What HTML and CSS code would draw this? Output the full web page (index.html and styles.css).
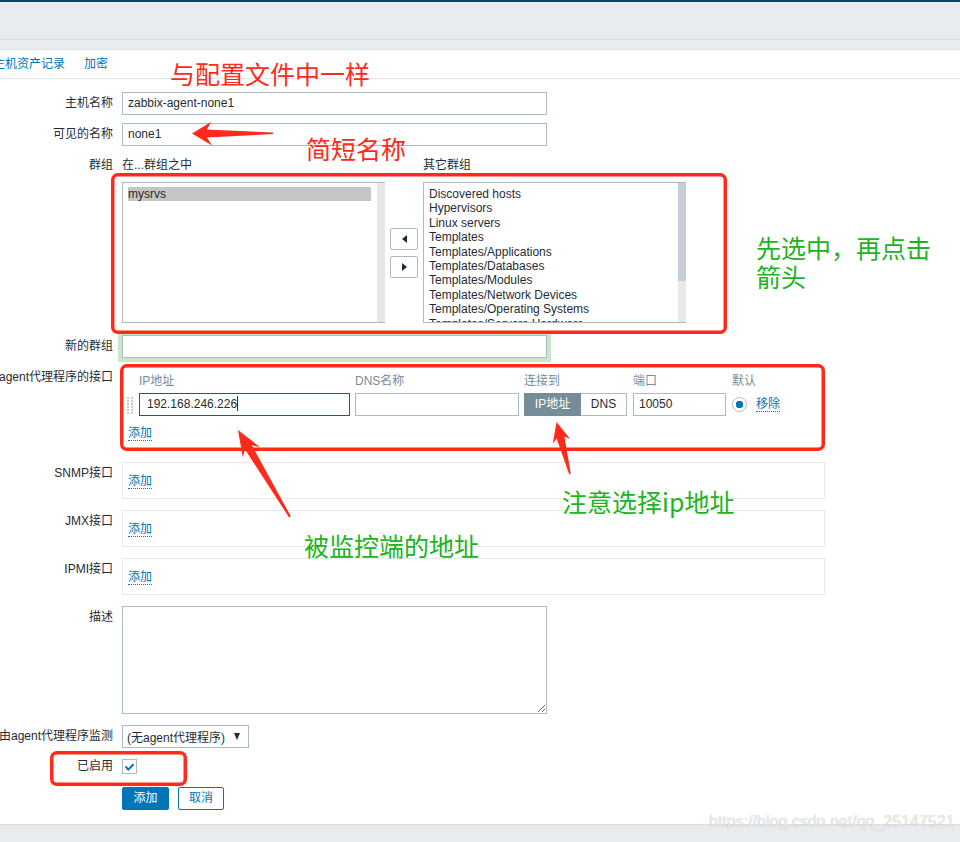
FILE: index.html
```html
<!DOCTYPE html>
<html lang="zh-CN">
<head>
<meta charset="utf-8">
<title>主机</title>
<link rel="stylesheet" href="styles.css">
</head>
<body>
<div class="page">
  <div class="topbar"></div>
  <div class="header"></div>
  <div class="subheader"></div>
  <main class="main">
    <nav class="tabs">
      <a class="tab">主机资产记录</a>
      <a class="tab">加密</a>
    </nav>
    <div class="form">
      <div class="row">
        <div class="lbl">主机名称</div>
        <div class="fld"><div class="input w425">zabbix-agent-none1</div></div>
      </div>
      <div class="row mt8">
        <div class="lbl">可见的名称</div>
        <div class="fld"><div class="input w425">none1</div></div>
      </div>
      <div class="row mt8">
        <div class="lbl">群组</div>
        <div class="fld">
          <div class="grp grp-head"><span>在...群组之中</span><span></span><span>其它群组</span></div>
          <div class="grp grp-body">
            <div class="listbox">
              <div class="items"><div class="item sel">mysrvs</div></div>
              <div class="sb"></div>
            </div>
            <div class="movers">
              <span class="mv"><span class="tri-l"></span></span>
              <span class="mv"><span class="tri-r"></span></span>
            </div>
            <div class="listbox">
              <div class="items">
                <div class="item">Discovered hosts</div>
                <div class="item">Hypervisors</div>
                <div class="item">Linux servers</div>
                <div class="item">Templates</div>
                <div class="item">Templates/Applications</div>
                <div class="item">Templates/Databases</div>
                <div class="item">Templates/Modules</div>
                <div class="item">Templates/Network Devices</div>
                <div class="item">Templates/Operating Systems</div>
                <div class="item">Templates/Servers Hardware</div>
              </div>
              <div class="sb"><div class="thumb"></div></div>
            </div>
          </div>
        </div>
      </div>
      <div class="row mt12">
        <div class="lbl">新的群组</div>
        <div class="fld"><div class="input w425 ok"></div></div>
      </div>
      <div class="row mt8">
        <div class="lbl">agent代理程序的接口</div>
        <div class="fld">
          <div class="iface">
            <div class="igrid ihead"><span></span><span>IP地址</span><span>DNS名称</span><span>连接到</span><span>端口</span><span>默认</span></div>
            <div class="igrid irow">
              <span class="handle"><svg width="6" height="17" viewBox="0 0 6 17"><g fill="#c3cbd1"><rect x="0" y="0" width="2" height="2"/><rect x="4" y="0" width="2" height="2"/><rect x="0" y="3" width="2" height="2"/><rect x="4" y="3" width="2" height="2"/><rect x="0" y="6" width="2" height="2"/><rect x="4" y="6" width="2" height="2"/><rect x="0" y="9" width="2" height="2"/><rect x="4" y="9" width="2" height="2"/><rect x="0" y="12" width="2" height="2"/><rect x="4" y="12" width="2" height="2"/><rect x="0" y="15" width="2" height="2"/><rect x="4" y="15" width="2" height="2"/></g></svg></span>
              <div class="input ip">192.168.246.226<span class="caret"></span></div>
              <div class="input dns"></div>
              <div class="seg"><span class="seg-on">IP地址</span><span class="seg-off">DNS</span></div>
              <div class="input port">10050</div>
              <div class="def"><span class="radio"></span><a class="link">移除</a></div>
            </div>
            <div class="addline"><a class="link">添加</a></div>
          </div>
        </div>
      </div>
      <div class="row mt12">
        <div class="lbl">SNMP接口</div>
        <div class="fld"><div class="ibox"><a class="link">添加</a></div></div>
      </div>
      <div class="row mt11">
        <div class="lbl">JMX接口</div>
        <div class="fld"><div class="ibox"><a class="link">添加</a></div></div>
      </div>
      <div class="row mt11">
        <div class="lbl">IPMI接口</div>
        <div class="fld"><div class="ibox"><a class="link">添加</a></div></div>
      </div>
      <div class="row mt11">
        <div class="lbl">描述</div>
        <div class="fld"><textarea class="desc"></textarea></div>
      </div>
      <div class="row mt11">
        <div class="lbl">由agent代理程序监测</div>
        <div class="fld"><div class="select"><span>(无agent代理程序)</span><span class="arrow"></span></div></div>
      </div>
      <div class="row mt7">
        <div class="lbl">已启用</div>
        <div class="fld"><span class="cb"><svg width="13" height="13" viewBox="0 0 13 13"><polyline points="2.5,6.3 5.3,9.6 10.5,4.2" fill="none" stroke="#0275b8" stroke-width="2"/></svg></span></div>
      </div>
      <div class="row mt9">
        <div class="lbl"></div>
        <div class="fld btns"><span class="btn btn-main">添加</span><span class="btn btn-alt">取消</span></div>
      </div>
    </div>
  </main>
  <div class="footer"></div>

  <svg class="marks" width="960" height="842" viewBox="0 0 960 842">
    <g fill="none" stroke="#ff2a1a" stroke-width="3.5">
      <rect x="112.75" y="174.75" width="612.5" height="157.5" rx="5"/>
      <rect x="121.75" y="365.75" width="701.5" height="83.5" rx="5"/>
      <rect x="51.75" y="752.75" width="133.5" height="31.5" rx="5"/>
    </g>
    <g fill="#ff2a1a">
      <polygon points="192,133.5 211,122 207,129.5 273,132.5 273,134 207,137.5 212,145.5"/>
      <polygon points="238,430 260,447.2 251.7,445.1 290.9,516.5 289.1,517.5 244.9,449.3 242.8,457.4"/>
      <polygon points="556.5,422 570.2,439.1 564.4,436.5 570.8,473.8 569.2,474.2 556.6,438.5 552.8,443.7"/>
    </g>
  </svg>
  <div class="note red n1">与配置文件中一样</div>
  <div class="note red n2">简短名称</div>
  <div class="note green n3"><div>先选中，再点击</div><div>箭头</div></div>
  <div class="note green n4">被监控端的地址</div>
  <div class="note green n5">注意选择ip地址</div>
  <div class="watermark">https://blog.csdn.net/qq_25147521</div>
</div>
</body>
</html>
```

FILE: styles.css
```css
* { box-sizing: border-box; }
html, body { margin: 0; padding: 0; }
body {
  font-family: "Liberation Sans", "Noto Sans CJK SC", sans-serif;
  font-size: 12px;
  color: #1f2c33;
  background: #fff;
}
.page {
  position: relative;
  width: 960px;
  height: 842px;
  overflow: hidden;
  display: flex;
  flex-direction: column;
}
.topbar { flex: none; height: 2px; background: #0d4565; }
.header { flex: none; height: 38px; background: #e9ecef; border-bottom: 1px solid #d9dee2; }
.subheader { flex: none; height: 10px; background: #e9ecef; border-bottom: 1px solid #dfe3e7; }
.main { flex: 1; background: #fff; }
.footer { flex: none; height: 18px; background: #e9ecef; border-top: 1px solid #d9dee2; }

.tabs {
  display: flex;
  gap: 19px;
  height: 29px;
  line-height: 28px;
  margin-left: -7px;
  border-bottom: 1px solid #e5e5e5;
}
.tab { color: #0275b8; }

.form { padding-top: 13px; }
.row {
  display: grid;
  grid-template-columns: 113px 1fr;
  column-gap: 9px;
}
.mt7 { margin-top: 7px; }
.mt8 { margin-top: 8px; }
.mt9 { margin-top: 9px; }
.mt11 { margin-top: 11px; }
.mt12 { margin-top: 12px; }
.lbl {
  display: flex;
  justify-content: flex-end;
  white-space: nowrap;
  line-height: 23px;
  height: 23px;
}
.input {
  height: 23px;
  border: 1px solid #acbbc2;
  padding: 0 5px;
  line-height: 21px;
  background: #fff;
  white-space: nowrap;
}
.w425 { width: 425px; }
.ok { box-shadow: 0 0 0 4px #cbe6cc; }

.grp { display: grid; grid-template-columns: 263px 38px 263px; }
.grp-head { height: 28px; line-height: 23px; }
.grp-body { height: 141px; }
.listbox {
  display: flex;
  height: 141px;
  border: 1px solid #acbbc2;
  border-right: none;
  overflow: hidden;
}
.items {
  flex: 1;
  padding: 4px 6px 4px 5px;
  line-height: 14.4px;
  white-space: nowrap;
  overflow: hidden;
}
.item.sel { background: #c5c5c5; }
.sb { width: 8px; background: #e8e8e8; display: flex; flex-direction: column; }
.thumb { height: 98px; background: #c5cfd6; }
.movers {
  display: flex;
  flex-direction: column;
  align-items: center;
  justify-content: center;
  gap: 6px;
}
.mv {
  width: 28px;
  height: 22px;
  border: 1px solid #acbbc2;
  border-radius: 2px;
  background: #fff;
  display: flex;
  align-items: center;
  justify-content: center;
}
.tri-l { width: 0; height: 0; border-top: 4px solid transparent; border-bottom: 4px solid transparent; border-right: 5px solid #1f2c33; }
.tri-r { width: 0; height: 0; border-top: 4px solid transparent; border-bottom: 4px solid transparent; border-left: 5px solid #1f2c33; }

.iface {
  width: 703px;
  border: 1px solid #e6e9ec;
  padding: 6px 4px 7px;
}
.igrid {
  display: grid;
  grid-template-columns: 12px 216px 169px 109px 99px auto;
}
.ihead { line-height: 16px; color: #768d99; }
.irow { margin-top: 4px; height: 23px; align-items: center; }
.handle { display: flex; align-items: center; height: 23px; padding-top: 1px; }
.ip { width: 211px; border-color: #24577a; color: #1f2c33; padding-left: 7px; }
.caret { display: inline-block; width: 1px; height: 15px; background: #1f2c33; vertical-align: -3px; }
.dns { width: 164px; }
.seg { display: flex; height: 23px; }
.seg-on {
  width: 57px;
  background: #768d99;
  color: #fff;
  text-align: center;
  line-height: 23px;
}
.seg-off {
  width: 46px;
  border: 1px solid #acbbc2;
  border-left: none;
  text-align: center;
  line-height: 21px;
}
.port { width: 93px; }
.def { display: flex; align-items: center; gap: 9px; }
.radio {
  width: 15px;
  height: 15px;
  border: 1px solid #acbbc2;
  border-radius: 50%;
  background: radial-gradient(circle, #0275b8 0 3.5px, #fff 4px);
}
.link {
  color: #0275b8;
  display: inline-block;
  line-height: 14px;
  border-bottom: 1px dotted #0275b8;
}
.addline { margin-top: 10px; height: 16px; padding-left: 1px; }

.ibox {
  width: 703px;
  height: 37px;
  border: 1px solid #e6e9ec;
  padding: 11px 5px 0;
}

.desc {
  display: block;
  width: 425px;
  height: 108px;
  margin: 0;
  border: 1px solid #acbbc2;
  font: inherit;
}
.select {
  width: 127px;
  height: 23px;
  border: 1px solid #acbbc2;
  padding: 0 8px 0 4px;
  display: flex;
  align-items: center;
  justify-content: space-between;
  white-space: nowrap;
}
.arrow {
  width: 0;
  height: 0;
  border-left: 3.5px solid transparent;
  border-right: 3.5px solid transparent;
  border-top: 7px solid #1f2c33;
}
.cb {
  display: block;
  margin-top: 4px;
  width: 15px;
  height: 15px;
  border: 1px solid #acbbc2;
  background: #fff;
}
.cb svg { display: block; }
.btns { display: flex; gap: 9px; }
.btn {
  height: 23px;
  line-height: 21px;
  text-align: center;
  border: 1px solid #0275b8;
  border-radius: 2px;
}
.btn-main { width: 47px; background: #0275b8; color: #fff; }
.btn-alt { width: 46px; background: #fff; color: #0275b8; }

.marks { position: absolute; left: 0; top: 0; pointer-events: none; }
.note {
  position: absolute;
  font-family: "Noto Sans CJK SC", sans-serif;
  font-size: 25px;
  line-height: 1;
  white-space: nowrap;
}
.red { color: #ff2a1a; }
.green { color: #1db41d; }
.n1 { left: 170px; top: 61px; }
.n2 { left: 306px; top: 136px; }
.n3 { left: 756px; top: 233px; line-height: 29px; }
.n4 { left: 304px; top: 533px; }
.n5 { left: 562px; top: 489px; }
.watermark {
  position: absolute;
  left: 709px;
  top: 814px;
  font-size: 16px;
  line-height: 16px;
  color: #ececec;
  text-shadow: 0 0 1px rgba(0, 0, 0, 0.25);
  white-space: nowrap;
}
```
